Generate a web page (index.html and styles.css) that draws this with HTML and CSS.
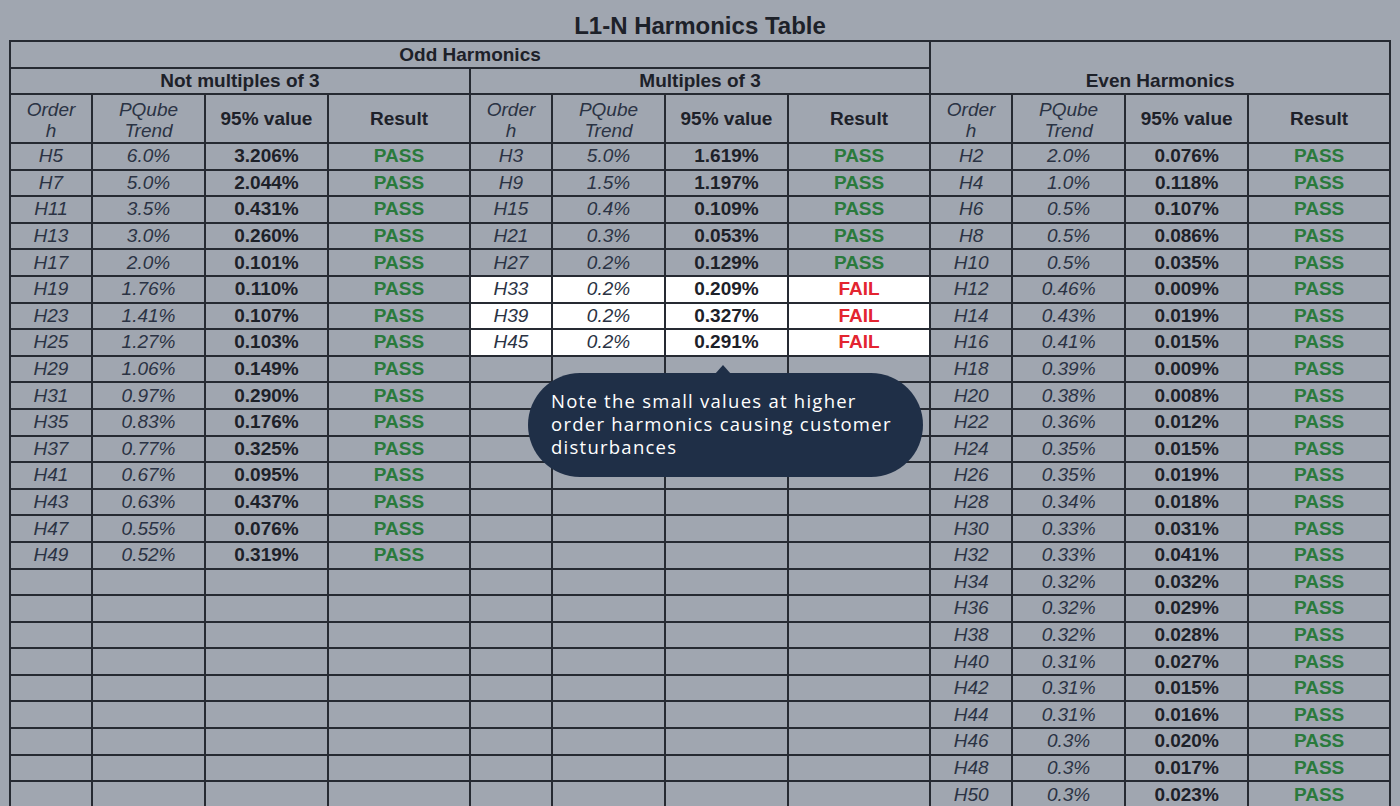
FILE: index.html
```html
<!DOCTYPE html>
<html lang="en">
<head>
<meta charset="utf-8">
<title>L1-N Harmonics Table</title>
<link rel="stylesheet" href="styles.css">
</head>
<body>
<div class="sheet">
  <h1 class="title">L1-N Harmonics Table</h1>
  <table class="grid">
    <colgroup>
      <col class="c-ord"><col class="c-trend"><col class="c-val"><col class="c-res">
      <col class="c-ord"><col class="c-trend"><col class="c-val"><col class="c-res">
      <col class="c-ord"><col class="c-trend"><col class="c-val"><col class="c-res">
    </colgroup>
    <thead>
      <tr class="h1row">
        <th colspan="8">Odd Harmonics</th>
        <th colspan="4" rowspan="2" class="even">Even Harmonics</th>
      </tr>
      <tr class="h2row">
        <th colspan="4">Not multiples of 3</th>
        <th colspan="4">Multiples of 3</th>
      </tr>
      <tr class="h3row">
        <th class="it">Order<br>h</th><th class="it">PQube<br>Trend</th><th>95% value</th><th>Result</th>
        <th class="it">Order<br>h</th><th class="it">PQube<br>Trend</th><th>95% value</th><th>Result</th>
        <th class="it">Order<br>h</th><th class="it">PQube<br>Trend</th><th>95% value</th><th>Result</th>
      </tr>
    </thead>
    <tbody>
      <tr><td>H5</td><td>6.0%</td><td>3.206%</td><td class="pass">PASS</td><td>H3</td><td>5.0%</td><td>1.619%</td><td class="pass">PASS</td><td>H2</td><td>2.0%</td><td>0.076%</td><td class="pass">PASS</td></tr>
      <tr><td>H7</td><td>5.0%</td><td>2.044%</td><td class="pass">PASS</td><td>H9</td><td>1.5%</td><td>1.197%</td><td class="pass">PASS</td><td>H4</td><td>1.0%</td><td>0.118%</td><td class="pass">PASS</td></tr>
      <tr><td>H11</td><td>3.5%</td><td>0.431%</td><td class="pass">PASS</td><td>H15</td><td>0.4%</td><td>0.109%</td><td class="pass">PASS</td><td>H6</td><td>0.5%</td><td>0.107%</td><td class="pass">PASS</td></tr>
      <tr><td>H13</td><td>3.0%</td><td>0.260%</td><td class="pass">PASS</td><td>H21</td><td>0.3%</td><td>0.053%</td><td class="pass">PASS</td><td>H8</td><td>0.5%</td><td>0.086%</td><td class="pass">PASS</td></tr>
      <tr><td>H17</td><td>2.0%</td><td>0.101%</td><td class="pass">PASS</td><td>H27</td><td>0.2%</td><td>0.129%</td><td class="pass">PASS</td><td>H10</td><td>0.5%</td><td>0.035%</td><td class="pass">PASS</td></tr>
      <tr><td>H19</td><td>1.76%</td><td>0.110%</td><td class="pass">PASS</td><td class="hl">H33</td><td class="hl">0.2%</td><td class="hl">0.209%</td><td class="hl fail">FAIL</td><td>H12</td><td>0.46%</td><td>0.009%</td><td class="pass">PASS</td></tr>
      <tr><td>H23</td><td>1.41%</td><td>0.107%</td><td class="pass">PASS</td><td class="hl">H39</td><td class="hl">0.2%</td><td class="hl">0.327%</td><td class="hl fail">FAIL</td><td>H14</td><td>0.43%</td><td>0.019%</td><td class="pass">PASS</td></tr>
      <tr><td>H25</td><td>1.27%</td><td>0.103%</td><td class="pass">PASS</td><td class="hl">H45</td><td class="hl">0.2%</td><td class="hl">0.291%</td><td class="hl fail">FAIL</td><td>H16</td><td>0.41%</td><td>0.015%</td><td class="pass">PASS</td></tr>
      <tr><td>H29</td><td>1.06%</td><td>0.149%</td><td class="pass">PASS</td><td></td><td></td><td></td><td></td><td>H18</td><td>0.39%</td><td>0.009%</td><td class="pass">PASS</td></tr>
      <tr><td>H31</td><td>0.97%</td><td>0.290%</td><td class="pass">PASS</td><td></td><td></td><td></td><td></td><td>H20</td><td>0.38%</td><td>0.008%</td><td class="pass">PASS</td></tr>
      <tr><td>H35</td><td>0.83%</td><td>0.176%</td><td class="pass">PASS</td><td></td><td></td><td></td><td></td><td>H22</td><td>0.36%</td><td>0.012%</td><td class="pass">PASS</td></tr>
      <tr><td>H37</td><td>0.77%</td><td>0.325%</td><td class="pass">PASS</td><td></td><td></td><td></td><td></td><td>H24</td><td>0.35%</td><td>0.015%</td><td class="pass">PASS</td></tr>
      <tr><td>H41</td><td>0.67%</td><td>0.095%</td><td class="pass">PASS</td><td></td><td></td><td></td><td></td><td>H26</td><td>0.35%</td><td>0.019%</td><td class="pass">PASS</td></tr>
      <tr><td>H43</td><td>0.63%</td><td>0.437%</td><td class="pass">PASS</td><td></td><td></td><td></td><td></td><td>H28</td><td>0.34%</td><td>0.018%</td><td class="pass">PASS</td></tr>
      <tr><td>H47</td><td>0.55%</td><td>0.076%</td><td class="pass">PASS</td><td></td><td></td><td></td><td></td><td>H30</td><td>0.33%</td><td>0.031%</td><td class="pass">PASS</td></tr>
      <tr><td>H49</td><td>0.52%</td><td>0.319%</td><td class="pass">PASS</td><td></td><td></td><td></td><td></td><td>H32</td><td>0.33%</td><td>0.041%</td><td class="pass">PASS</td></tr>
      <tr><td></td><td></td><td></td><td></td><td></td><td></td><td></td><td></td><td>H34</td><td>0.32%</td><td>0.032%</td><td class="pass">PASS</td></tr>
      <tr><td></td><td></td><td></td><td></td><td></td><td></td><td></td><td></td><td>H36</td><td>0.32%</td><td>0.029%</td><td class="pass">PASS</td></tr>
      <tr><td></td><td></td><td></td><td></td><td></td><td></td><td></td><td></td><td>H38</td><td>0.32%</td><td>0.028%</td><td class="pass">PASS</td></tr>
      <tr><td></td><td></td><td></td><td></td><td></td><td></td><td></td><td></td><td>H40</td><td>0.31%</td><td>0.027%</td><td class="pass">PASS</td></tr>
      <tr><td></td><td></td><td></td><td></td><td></td><td></td><td></td><td></td><td>H42</td><td>0.31%</td><td>0.015%</td><td class="pass">PASS</td></tr>
      <tr><td></td><td></td><td></td><td></td><td></td><td></td><td></td><td></td><td>H44</td><td>0.31%</td><td>0.016%</td><td class="pass">PASS</td></tr>
      <tr><td></td><td></td><td></td><td></td><td></td><td></td><td></td><td></td><td>H46</td><td>0.3%</td><td>0.020%</td><td class="pass">PASS</td></tr>
      <tr><td></td><td></td><td></td><td></td><td></td><td></td><td></td><td></td><td>H48</td><td>0.3%</td><td>0.017%</td><td class="pass">PASS</td></tr>
      <tr><td></td><td></td><td></td><td></td><td></td><td></td><td></td><td></td><td>H50</td><td>0.3%</td><td>0.023%</td><td class="pass">PASS</td></tr>
    </tbody>
  </table>
  <div class="note">Note the small values at higher order harmonics causing customer disturbances</div>
</div>
</body>
</html>
```
FILE: styles.css
```css
html, body {
  margin: 0;
  padding: 0;
  background: #a0a6b0;
  overflow: hidden;
}

.sheet {
  position: relative;
  padding: 12px 0 0 9px;
  font-family: "Liberation Sans", Arial, sans-serif;
  color: #1f232b;
}

.title {
  margin: 0;
  padding-right: 9px;
  font-size: 24px;
  line-height: 28px;
  font-weight: bold;
  text-align: center;
  color: #1d2129;
}

.grid {
  border-collapse: collapse;
  table-layout: fixed;
  width: 1380px;
  font-size: 19px;
}

.c-ord { width: 82px; }
.c-trend { width: 113px; }
.c-val { width: 123px; }
.c-res { width: 142px; }

.grid th,
.grid td {
  border: 2px solid #262a32;
  padding: 0;
  text-align: center;
  vertical-align: middle;
  white-space: nowrap;
  overflow: hidden;
}

.grid th {
  font-weight: bold;
  color: #1d2129;
}

.h1row { height: 27px; }
.h2row { height: 26px; }
.h3row { height: 49px; }

.grid th.even {
  vertical-align: bottom;
  padding-bottom: 1px;
}

.grid th.it {
  font-weight: normal;
  font-style: italic;
  line-height: 21px;
  color: #2b3344;
  padding-top: 2px;
}

.grid tbody tr { height: 26.6px; }

.grid td:nth-child(4n+1),
.grid td:nth-child(4n+2) {
  font-style: italic;
  color: #2b3344;
}

.grid td:nth-child(4n+3) {
  font-weight: bold;
  color: #1d2129;
}

.grid td.pass {
  font-weight: bold;
  color: #2a7a3c;
}

.grid td.fail {
  font-weight: bold;
  color: #e32530;
}

.grid td.hl {
  background: #ffffff;
}

.note {
  position: absolute;
  left: 528px;
  top: 373px;
  width: 395px;
  height: 104px;
  box-sizing: border-box;
  padding: 16px 12px 0 23px;
  border-radius: 52px;
  background: #1f2f47;
  color: #ffffff;
  font-family: "Open Sans", "Noto Sans", sans-serif;
  font-size: 18.5px;
  line-height: 23px;
  letter-spacing: 1.25px;
}

.note::before {
  content: "";
  position: absolute;
  left: 187px;
  top: -8px;
  border-left: 8px solid transparent;
  border-right: 8px solid transparent;
  border-bottom: 9px solid #1f2f47;
}
```
